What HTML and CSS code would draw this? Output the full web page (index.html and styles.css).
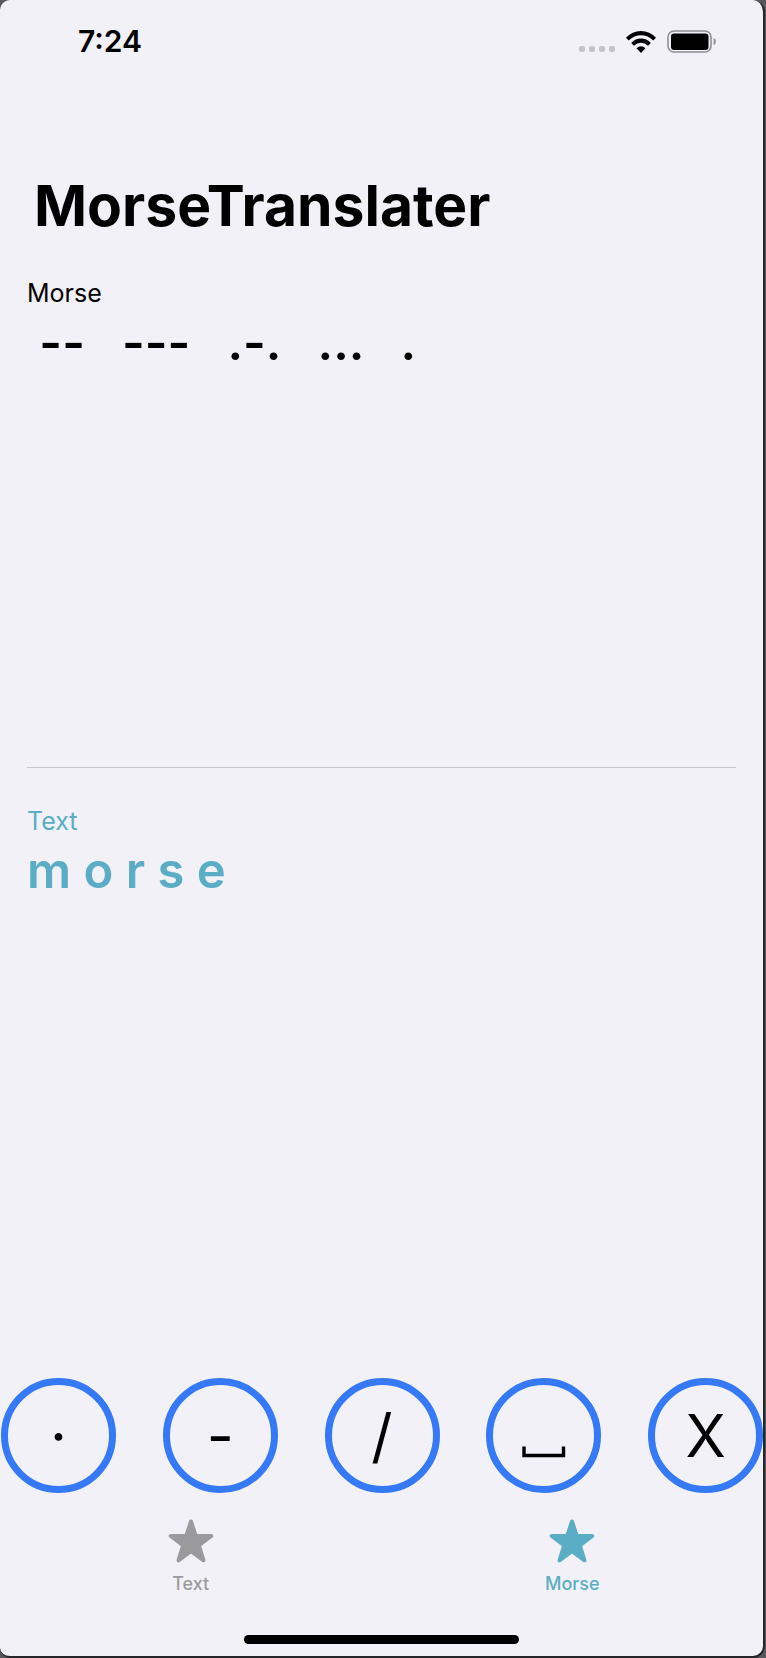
FILE: index.html
```html
<!DOCTYPE html>
<html lang="en">
<head>
<meta charset="utf-8">
<meta name="viewport" content="width=device-width, initial-scale=1">
<title>MorseTranslater</title>
<link rel="stylesheet" href="styles.css">
</head>
<body>
<div class="screen">
  <header class="status">
    <time class="clock">7:24</time>
    <div class="indicators">
      <span class="signal"><i></i><i></i><i></i><i></i></span>
      <svg class="wifi" viewBox="0 0 30 22" width="30" height="22" aria-label="Wi-Fi">
        <path d="M0 6.8Q6.200 0 15 0T30 6.800L27.300 9.500Q22 4.200 15 4.200T2.700 9.500Z"/>
        <path d="M5.200 12Q9.400 7.600 15 7.600T24.800 12L22 14.700Q19 11.700 15 11.700T8 14.700Z"/>
        <path d="M10.500 17.300Q15 13.200 19.500 17.300L15 22Z"/>
      </svg>
      <svg class="battery" viewBox="0 0 49 23" width="49" height="23" aria-label="Battery full">
        <rect x="1" y="1" width="43" height="21" rx="6" fill="none" stroke="#8f8f92" stroke-width="1.600"/>
        <rect x="4" y="3.500" width="37.500" height="16.500" rx="3"/>
        <path d="M46.500 8Q49 8.800 49 11.500T46.500 15Z" fill="#98989b"/>
      </svg>
    </div>
  </header>
  <h1 class="title">MorseTranslater</h1>
  <main class="translator">
    <section class="pane source">
      <label class="caption" for="morse">Morse</label>
      <textarea class="entry" id="morse" spellcheck="false"> --   ---   .-.   ...   .</textarea>
    </section>
    <section class="pane result">
      <label class="caption" for="plain">Text</label>
      <output class="plain" id="plain">m o r s e</output>
    </section>
  </main>
  <div class="keys">
    <button class="key" type="button">·</button>
    <button class="key" type="button">-</button>
    <button class="key" type="button">/</button>
    <button class="key" type="button" aria-label="Space">
      <svg viewBox="0 0 44 54" width="44" height="54"><path d="M2 37.500V46.500H41.500V37.500" fill="none" stroke="#000" stroke-width="3.400"/></svg>
    </button>
    <button class="key" type="button">X</button>
  </div>
  <nav class="tabs">
    <a class="tab" href="#text">
      <svg class="star" viewBox="0 0 46 44" width="46" height="44"><path d="M23 2.500L27.800 17H43.300L30.800 26.300L35.500 41.300L23 32.200L10.500 41.300L15.200 26.300L2.700 17H18.200Z"/></svg>
      <span>Text</span>
    </a>
    <a class="tab active" href="#morse" aria-current="page">
      <svg class="star" viewBox="0 0 46 44" width="46" height="44"><path d="M23 2.500L27.800 17H43.300L30.800 26.300L35.500 41.300L23 32.200L10.500 41.300L15.200 26.300L2.700 17H18.200Z"/></svg>
      <span>Morse</span>
    </a>
  </nav>
  <div class="home"></div>
</div>
</body>
</html>
```
FILE: styles.css
```css
* { box-sizing: border-box; }
body {
  margin: 0;
  background: #58585a;
  color: #000;
  font-family: Inter, "Liberation Sans", sans-serif;
}
.screen {
  display: flex;
  flex-direction: column;
  min-height: 100vh;
  margin-right: 1px;
  background: #f2f1f7;
  border-right: 2px solid #262628;
  border-bottom: 2px solid #262628;
  border-radius: 10px 12px 12px 10px;
}
.status {
  display: flex;
  justify-content: space-between;
  align-items: center;
  height: 82px;
  padding: 0 47px 0 78px;
}
.clock { font-size: 30px; font-weight: 600; }
.indicators { display: flex; align-items: flex-end; gap: 11px; }
.signal { display: flex; gap: 4px; padding-bottom: 1px; }
.signal i { width: 6px; height: 6px; border-radius: 2px; background: #c3c3c8; }
.title {
  margin: 82px 34px 0;
  font-size: 57px;
  line-height: 84px;
  font-weight: 700;
}
.translator { flex: 1; display: flex; flex-direction: column; padding: 0 27px; }
.pane { display: flex; flex-direction: column; flex: 1; }
.source { border-bottom: 1px solid #c6c6c9; flex: none; height: 520px; padding-top: 27px; }
.result { padding-top: 35px; color: #5aadc4; }
.caption { font-size: 25px; line-height: 36px; }
.entry {
  flex: 1;
  width: 100%;
  margin: 0;
  padding: 0;
  border: 0;
  outline: 0;
  resize: none;
  background: none;
  color: inherit;
  font: 600 49px/64px Inter, "Liberation Sans", sans-serif;
  white-space: pre-wrap;
}
.plain { font-size: 49px; line-height: 64px; font-weight: 600; }
.keys { display: flex; justify-content: space-between; padding-left: 1px; }
.key {
  display: flex;
  align-items: center;
  justify-content: center;
  width: 115px;
  height: 115px;
  padding: 0;
  border: 7px solid #3579f6;
  border-radius: 50%;
  background: none;
  color: #000;
  font: 400 59px/72px Inter, "Liberation Sans", sans-serif;
}
.tabs { display: flex; padding-top: 26px; }
.tab {
  flex: 1;
  display: flex;
  flex-direction: column;
  align-items: center;
  gap: 9px;
  color: #9b9b9d;
  font-size: 18px;
  line-height: 24px;
  font-weight: 500;
  text-decoration: none;
}
.active { color: #5aadc4; }
.star { fill: currentColor; stroke: currentColor; stroke-linejoin: round; }
.star path { stroke-width: 4; }
.home {
  align-self: center;
  width: 36%;
  height: 9px;
  margin: 39px 0 12px;
  border-radius: 5px;
  background: #000;
}
```
